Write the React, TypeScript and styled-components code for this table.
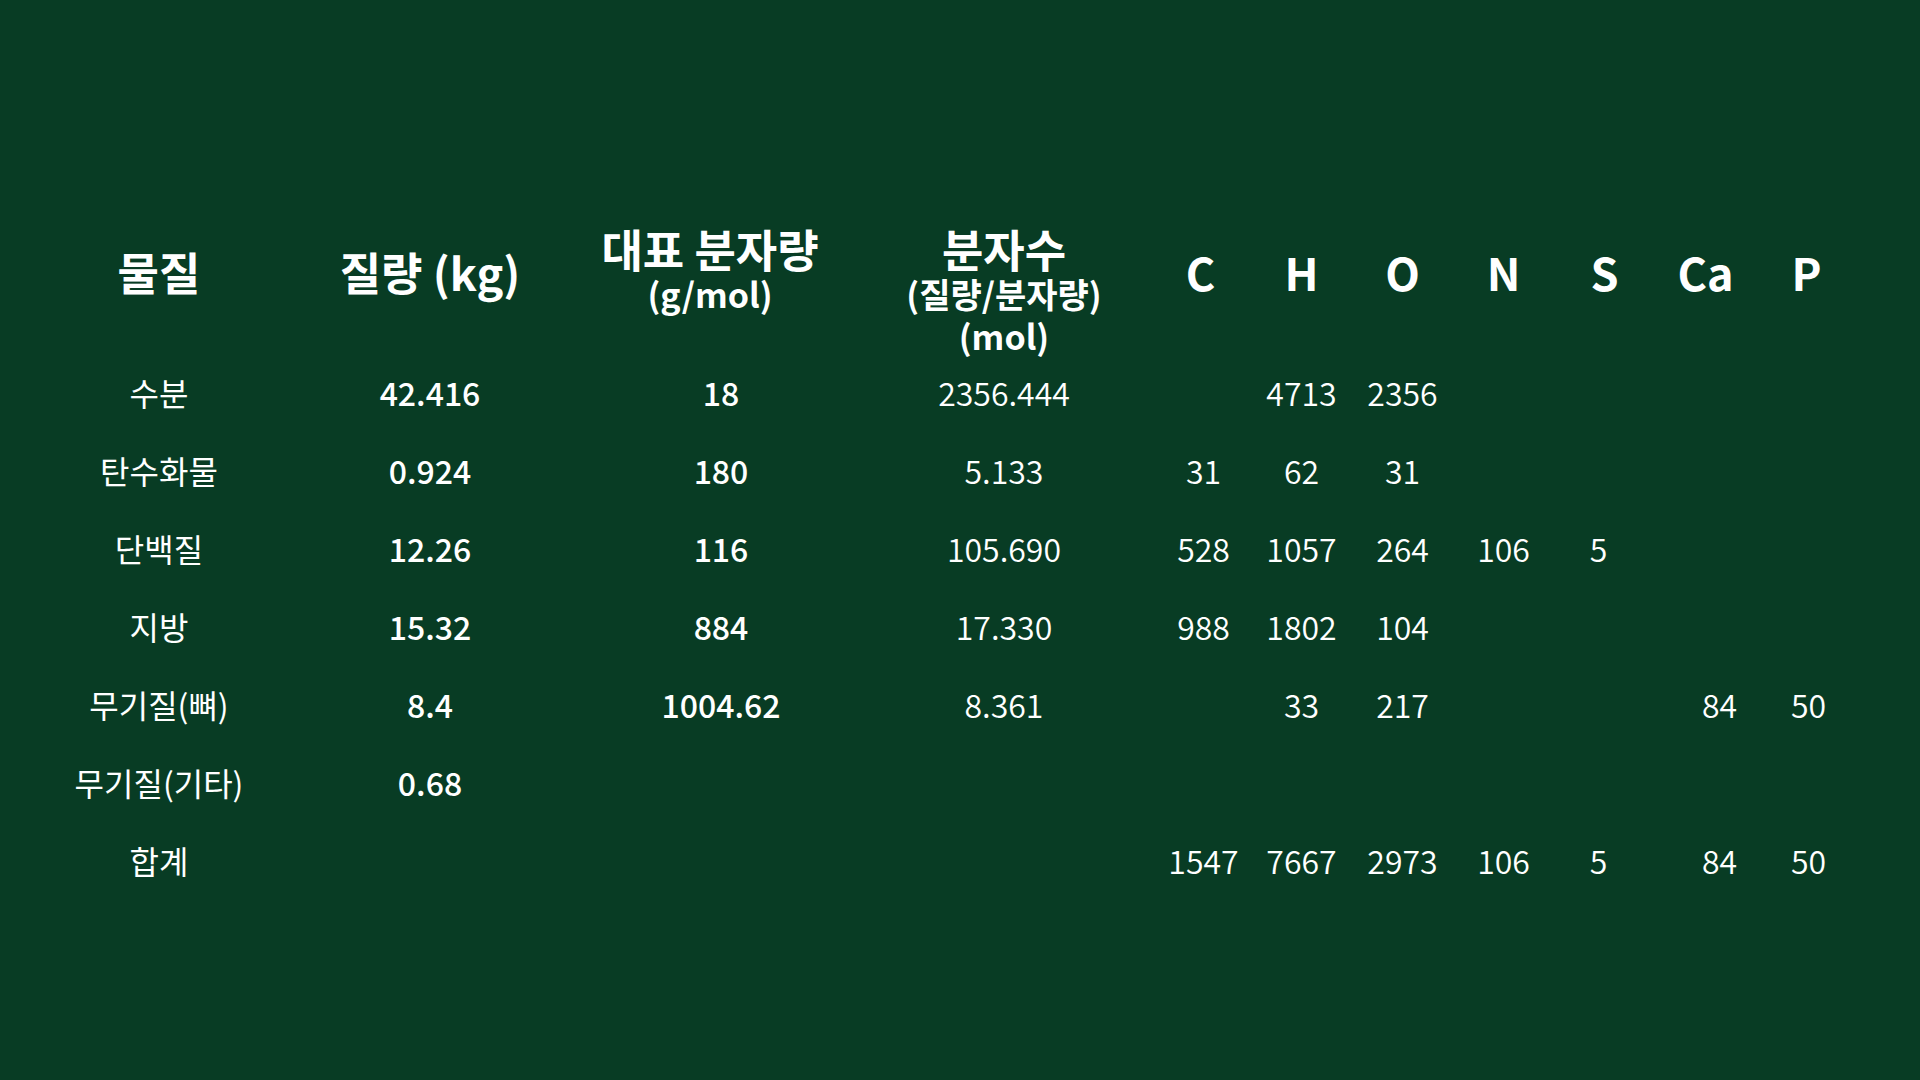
import React from "react";
import styled, { createGlobalStyle } from "styled-components";

const GlobalStyle = createGlobalStyle`
    html, body {
        margin: 0;
        padding: 0;
        background: #083c24;
    }
    body {
        font-family: "Noto Sans CJK KR", "Noto Sans", sans-serif;
        color: #ffffff;
    }
`;

type Col = {
    key: string;
    width: number;
    head: string[];
    single?: boolean;
    weight?: number;
    nudge?: number;
    headNudge?: number;
};

const columns: Col[] = [
    { key: "name", width: 238, head: ["물질"], single: true, weight: 400 },
    { key: "mass", width: 304, head: ["질량 (kg)"], single: true, weight: 500 },
    { key: "mw", width: 276, head: ["대표 분자량", "(g/mol)"], weight: 500, nudge: 1, headNudge: -10 },
    { key: "mol", width: 292, head: ["분자수", "(질량/분자량)", "(mol)"], weight: 350 },
    { key: "C", width: 101, head: ["C"], single: true, weight: 350, nudge: 3 },
    { key: "H", width: 101, head: ["H"], single: true, weight: 350 },
    { key: "O", width: 101, head: ["O"], single: true, weight: 350 },
    { key: "N", width: 101, head: ["N"], single: true, weight: 350 },
    { key: "S", width: 101, head: ["S"], single: true, weight: 350, nudge: -6 },
    { key: "Ca", width: 101, head: ["Ca"], single: true, weight: 350, nudge: 14 },
    { key: "P", width: 101, head: ["P"], single: true, weight: 350, nudge: 2 },
];

const rows: string[][] = [
    ["수분", "42.416", "18", "2356.444", "", "4713", "2356", "", "", "", ""],
    ["탄수화물", "0.924", "180", "5.133", "31", "62", "31", "", "", "", ""],
    ["단백질", "12.26", "116", "105.690", "528", "1057", "264", "106", "5", "", ""],
    ["지방", "15.32", "884", "17.330", "988", "1802", "104", "", "", "", ""],
    ["무기질(뼈)", "8.4", "1004.62", "8.361", "", "33", "217", "", "", "84", "50"],
    ["무기질(기타)", "0.68", "", "", "", "", "", "", "", "", ""],
    ["합계", "", "", "", "1547", "7667", "2973", "106", "5", "84", "50"],
];

const template = columns.map(c => `${c.width}px`).join(" ");

export default function App() {
    return (
        <>
            <GlobalStyle />
            <Slide>
                <Table>
                    <HeadRow $template={template}>
                        {columns.map(col => (
                            <HeadCell
                                key={col.key}
                                $single={!!col.single}
                                $nudge={col.headNudge ?? 0}
                            >
                                {col.head.map((line, i) => (
                                    i === 0
                                        ? <HeadMain key={i}>{line}</HeadMain>
                                        : <HeadSub key={i}>{line}</HeadSub>
                                ))}
                            </HeadCell>
                        ))}
                    </HeadRow>
                    {rows.map((row, r) => (
                        <BodyRow key={r} $template={template}>
                            {row.map((value, c) => (
                                <Cell
                                    key={columns[c].key}
                                    $weight={columns[c].weight ?? 400}
                                    $nudge={columns[c].nudge ?? 0}
                                >
                                    {value}
                                </Cell>
                            ))}
                        </BodyRow>
                    ))}
                </Table>
            </Slide>
        </>
    );
}

const Slide = styled.div`
    width: 1920px;
    height: 1080px;
    box-sizing: border-box;
    padding: 225px 0 0 40px;
    background: #083c24;
    overflow: hidden;
`;

const Table = styled.div`
    display: flex;
    flex-direction: column;
`;

const HeadRow = styled.div<{ $template: string }>`
    display: grid;
    grid-template-columns: ${p => p.$template};
    align-items: start;
    height: 128px;
`;

const HeadCell = styled.div<{ $single: boolean; $nudge: number }>`
    display: flex;
    flex-direction: column;
    align-items: center;
    text-align: center;
    padding-top: ${p => (p.$single ? "23px" : "0")};
    font-weight: 700;
    white-space: nowrap;
    transform: translateX(${p => p.$nudge}px);
`;

const HeadMain = styled.div`
    font-size: 45px;
    line-height: 48px;
`;

const HeadSub = styled.div`
    font-size: 34px;
    line-height: 42px;
`;

const BodyRow = styled.div<{ $template: string }>`
    display: grid;
    grid-template-columns: ${p => p.$template};
    align-items: center;
    height: 78px;
`;

const Cell = styled.div<{ $weight: number; $nudge: number }>`
    text-align: center;
    white-space: nowrap;
    font-size: 32px;
    line-height: 40px;
    font-weight: ${p => p.$weight};
    transform: translateX(${p => p.$nudge}px);
`;
